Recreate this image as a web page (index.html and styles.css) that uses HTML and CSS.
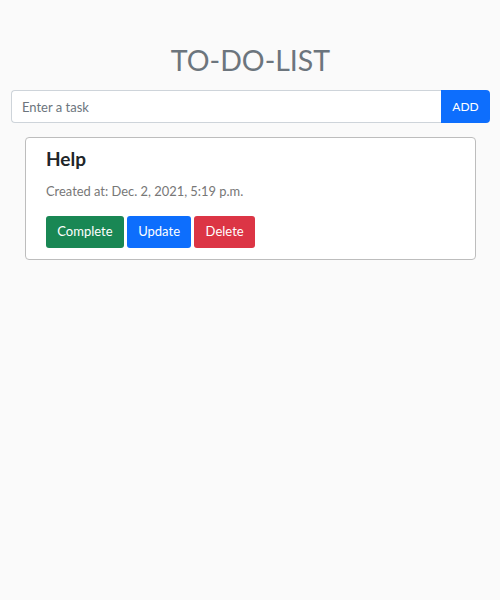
FILE: index.html
```html
<!DOCTYPE html>
<html>
<head>
<meta charset="utf-8">
<link rel="stylesheet" href="styles.css">
</head>
<body>
<div class="page">
  <h1 class="title">TO-DO-LIST</h1>
  <form class="input-group">
    <input class="task-input" type="text" placeholder="Enter a task">
    <button class="add-btn" type="button">ADD</button>
  </form>
  <div class="card">
    <h2 class="task-title">Help</h2>
    <p class="task-meta">Created at: Dec. 2, 2021, 5:19 p.m.</p>
    <div class="actions">
      <button class="btn btn-green" type="button">Complete</button>
      <button class="btn btn-blue" type="button">Update</button>
      <button class="btn btn-red" type="button">Delete</button>
    </div>
  </div>
</div>
</body>
</html>
```
FILE: styles.css
```css
html, body {
  margin: 0;
  padding: 0;
  background: #fafafa;
  font-family: Lato, "Liberation Sans", sans-serif;
}
.page {
  padding: 40px 10px 0 11px;
}
.title {
  margin: 0 0 10px;
  text-align: center;
  font-weight: 400;
  font-size: 28.5px;
  line-height: 40px;
  color: #6c757d;
}
.input-group {
  display: flex;
  margin: 0;
  height: 33px;
}
.task-input {
  flex: 1;
  min-width: 0;
  margin: 0;
  border: 1px solid #ced4da;
  border-right: none;
  border-radius: 4px 0 0 4px;
  background: #fff;
  padding: 0 10px;
  font-family: inherit;
  font-size: 13px;
  color: #212529;
  outline: none;
}
.task-input::placeholder {
  color: #6c757d;
}
.add-btn {
  width: 49px;
  margin: 0;
  border: none;
  border-radius: 0 4px 4px 0;
  background: #0d6efd;
  color: #fff;
  font-family: inherit;
  font-size: 12px;
  padding: 0;
}
.card {
  margin: 14px 14px 0 14px;
  border: 1px solid #bdbdbd;
  border-radius: 4px;
  background: #fff;
  padding: 9px 20px 11px 20px;
}
.task-title {
  margin: 0;
  font-size: 19px;
  line-height: 24px;
  font-weight: 700;
  color: #212529;
}
.task-meta {
  margin: 11px 0 0;
  font-size: 12.9px;
  line-height: 18px;
  color: #777;
}
.actions {
  display: flex;
  gap: 3px;
  margin-top: 16px;
}
.btn {
  height: 32px;
  border: none;
  border-radius: 3px;
  color: #fff;
  font-family: inherit;
  font-size: 13px;
  line-height: 30px;
  padding: 0 11.3px 2px;
}
.btn-green { background: #198754; }
.btn-blue { background: #0d6efd; }
.btn-red { background: #dc3545; }
```
